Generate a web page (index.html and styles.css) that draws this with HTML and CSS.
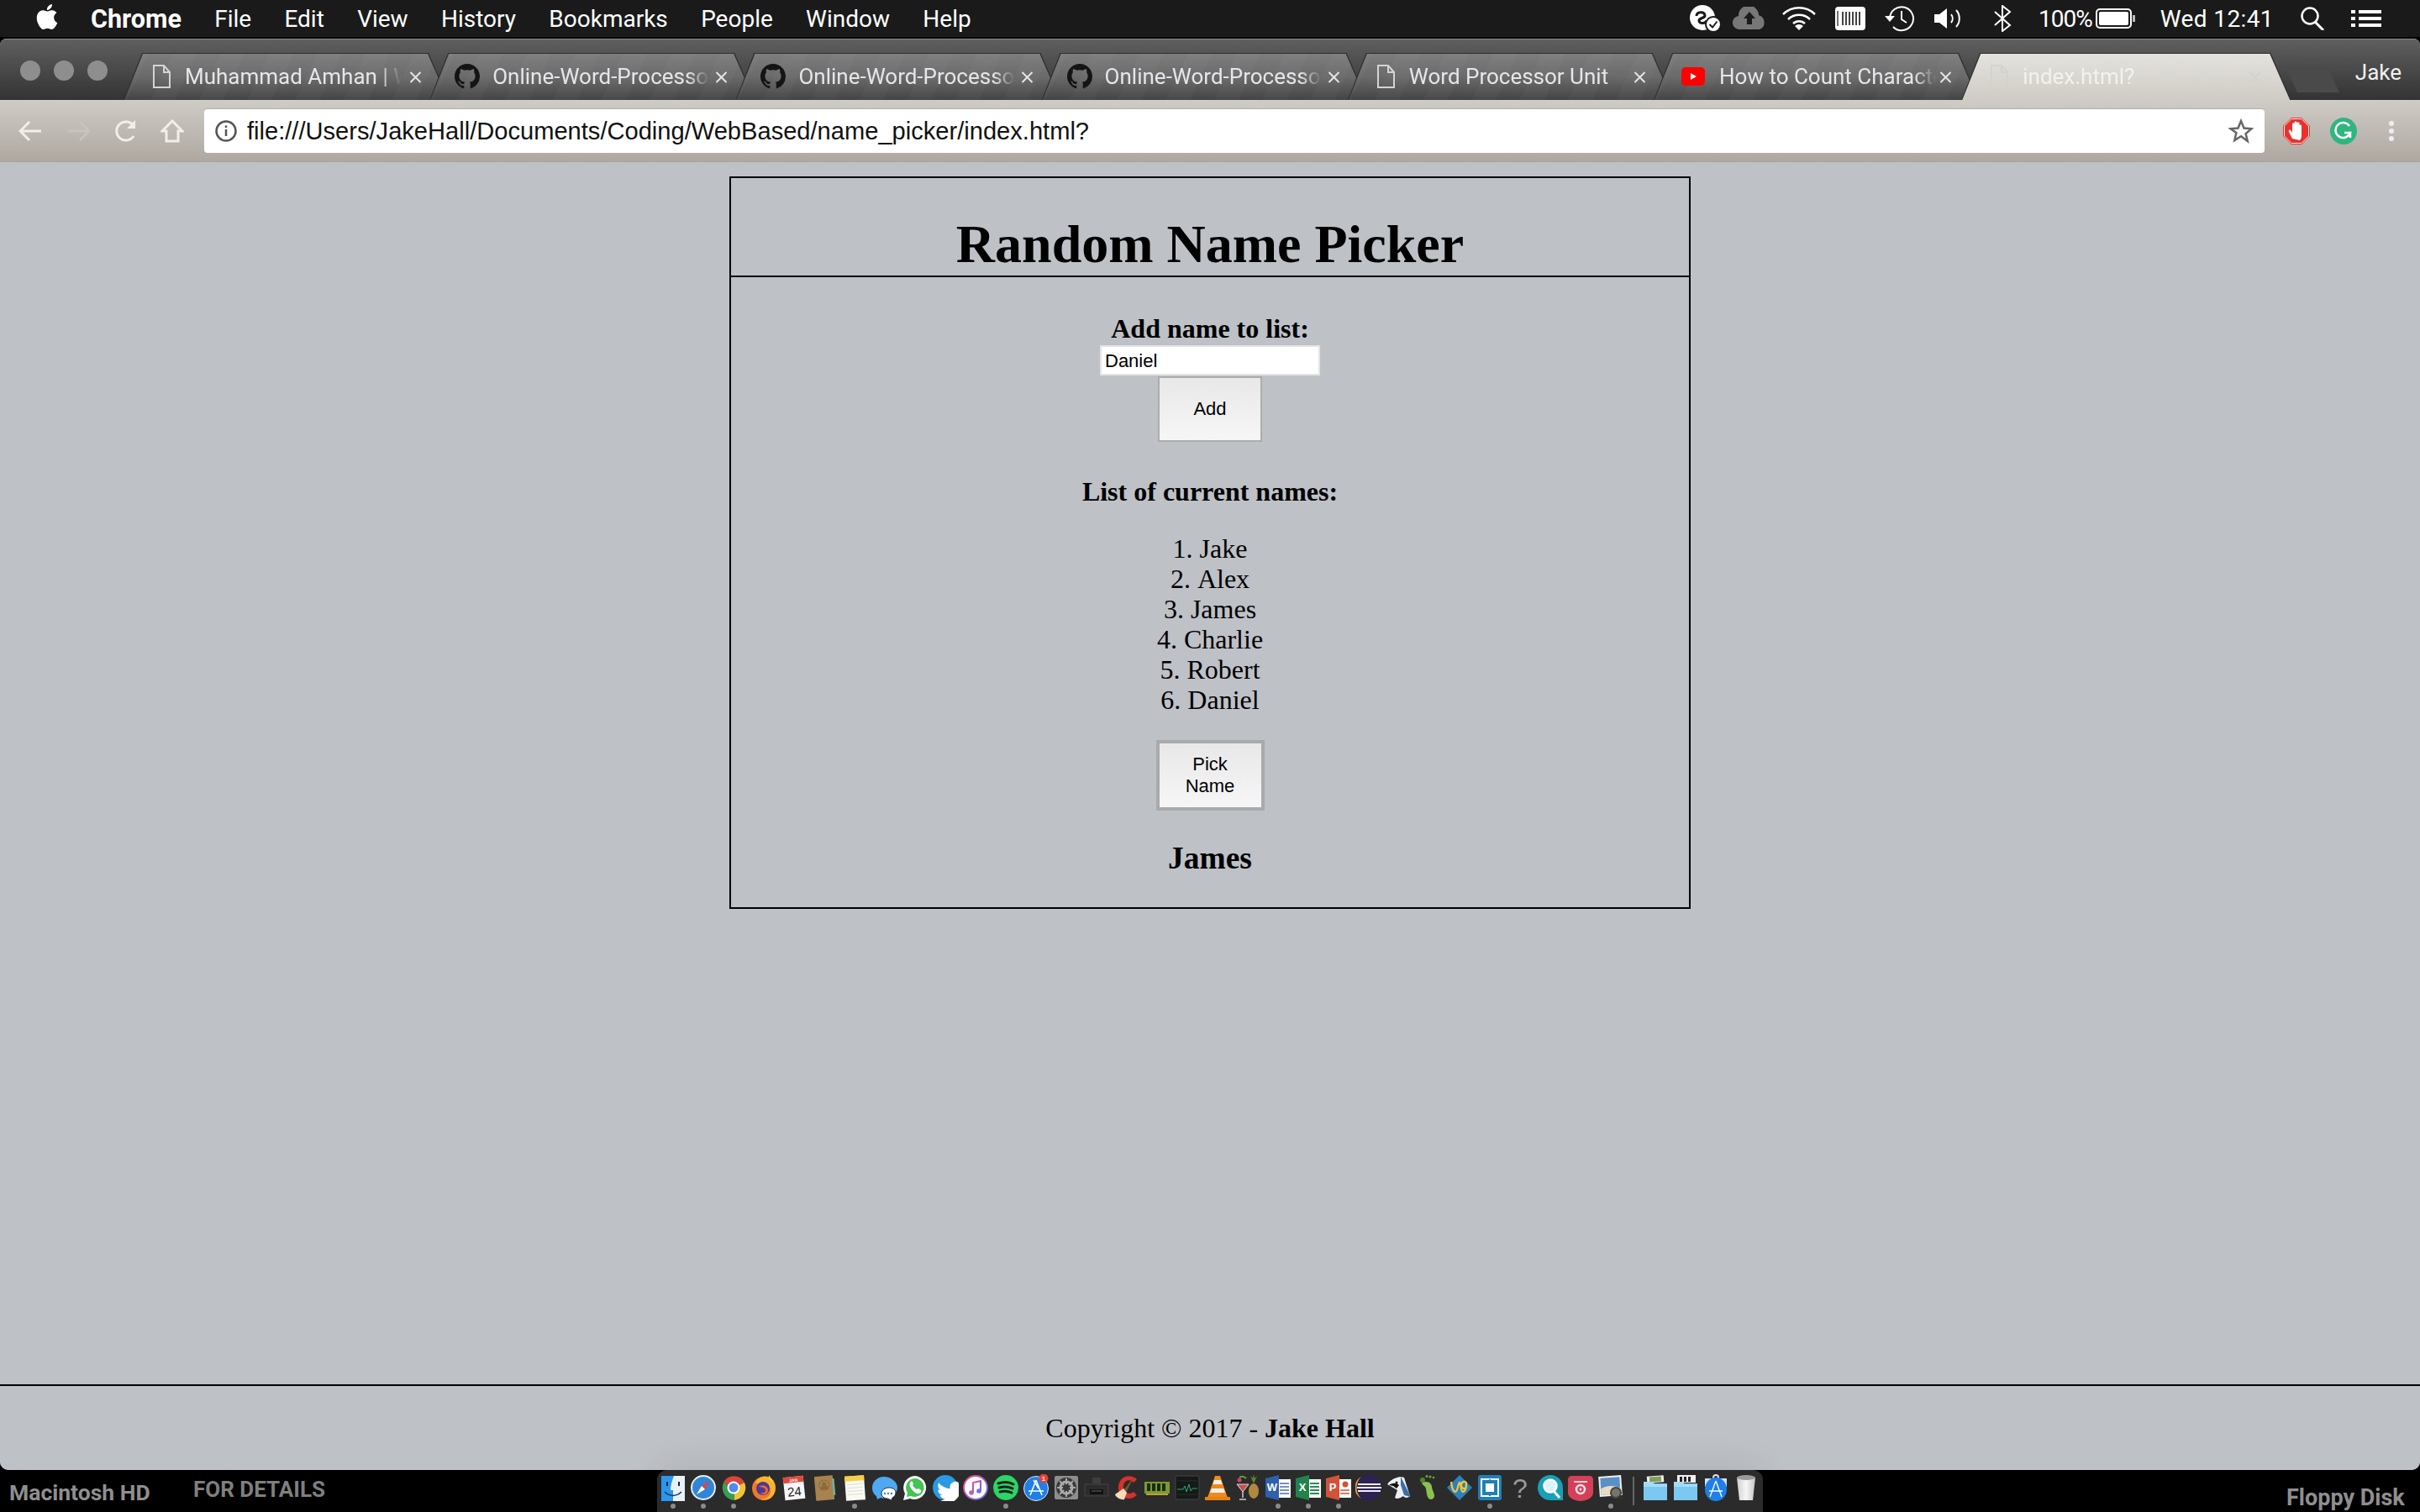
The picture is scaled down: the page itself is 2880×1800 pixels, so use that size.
FILE: index.html
```html
<!DOCTYPE html>
<html lang="en">
<head>
<meta charset="utf-8">
<title>Random Name Picker</title>
<link rel="stylesheet" href="styles.css">
</head>
<body>
<svg class="defs" width="0" height="0" aria-hidden="true">
  <symbol id="gh" viewBox="0 0 16 16"><path d="M8 0C3.58 0 0 3.58 0 8c0 3.54 2.29 6.53 5.47 7.59.4.07.55-.17.55-.38 0-.19-.01-.82-.01-1.49-2.01.37-2.53-.49-2.69-.94-.09-.23-.48-.94-.82-1.13-.28-.15-.68-.52-.01-.53.63-.01 1.08.58 1.23.82.72 1.21 1.87.87 2.33.66.07-.52.28-.87.51-1.07-1.78-.2-3.64-.89-3.64-3.95 0-.87.31-1.59.82-2.15-.08-.2-.36-1.02.08-2.12 0 0 .67-.21 2.2.82.64-.18 1.32-.27 2-.27.68 0 1.36.09 2 .27 1.53-1.04 2.2-.82 2.2-.82.44 1.1.16 1.92.08 2.12.51.56.82 1.27.82 2.15 0 3.07-1.87 3.75-3.65 3.95.29.25.54.73.54 1.48 0 1.07-.01 1.93-.01 2.2 0 .21.15.46.55.38A8.013 8.013 0 0016 8c0-4.42-3.58-8-8-8z" fill="#141414"/></symbol>
  <symbol id="doc" viewBox="0 0 21 28"><path d="M1 1h12l7 8v18H1z M13 1v8h7" fill="none" stroke="currentColor" stroke-width="2"/></symbol>
  <symbol id="cls" viewBox="0 0 15 14"><path d="M1.500 1 13.500 13M13.500 1 1.500 13" fill="none" stroke="currentColor" stroke-width="2"/></symbol>
  <symbol id="fold" viewBox="0 0 32 32"><path d="M2 11h28v20H2z" fill="#7cc8f2"/><path d="M2 9h11l2 3h15v3H2z" fill="#a3dcf8"/></symbol>
</svg>

<header class="menubar">
  <svg class="apple" viewBox="0 0 24 24" width="30" height="32"><path fill="#fff" d="M12.152 6.896c-.948 0-2.415-1.078-3.96-1.04-2.04.027-3.91 1.183-4.961 3.014-2.117 3.675-.546 9.103 1.519 12.09 1.013 1.454 2.208 3.09 3.792 3.039 1.52-.065 2.09-.987 3.935-.987 1.831 0 2.35.987 3.96.948 1.637-.026 2.676-1.48 3.676-2.948 1.156-1.688 1.636-3.325 1.662-3.415-.039-.013-3.182-1.221-3.22-4.857-.026-3.04 2.48-4.494 2.597-4.559-1.429-2.09-3.623-2.324-4.39-2.376-2-.156-3.675 1.09-4.61 1.09zM15.53 3.83c.843-1.012 1.4-2.427 1.245-3.83-1.207.052-2.662.805-3.532 1.818-.78.896-1.454 2.338-1.273 3.714 1.338.104 2.715-.688 3.559-1.701"/></svg>
  <nav class="menus">
    <strong>Chrome</strong><span>File</span><span>Edit</span><span>View</span><span>History</span><span>Bookmarks</span><span>People</span><span>Window</span><span>Help</span>
  </nav>
  <div class="status">
    <svg width="40" height="32" viewBox="0 0 40 32"><circle cx="17" cy="15" r="15" fill="#fff"/><path d="M10 13c0-5 9-6 10-1 1 4-8 3-7 7 1 4 9 3 9-1" fill="none" stroke="#1a1a1a" stroke-width="3"/><circle cx="30" cy="23" r="9" fill="#fff" stroke="#1a1a1a" stroke-width="2"/><path d="M25.500 23l3.500 3.500 5.500-7" fill="none" stroke="#1a1a1a" stroke-width="2"/></svg>
    <svg class="m13" width="40" height="28" viewBox="0 0 40 28"><path d="M9 27a8 8 0 0 1-2-16 12 12 0 0 1 24-1 9 9 0 0 1 1 17z" fill="#777"/><path d="M20 6l7 8h-4v7h-6v-7h-4z" fill="#1a1a1a"/></svg>
    <svg class="m18" width="42" height="30" viewBox="0 0 42 30"><path d="M2 10a27 27 0 0 1 38 0M8 16a19 19 0 0 1 26 0M14 21a10 10 0 0 1 14 0" fill="none" stroke="#fff" stroke-width="2.500"/><path d="M21 29l-5-5a7 7 0 0 1 10 0z" fill="#fff"/></svg>
    <svg class="m22" width="36" height="28" viewBox="0 0 36 28"><rect width="36" height="28" rx="4" fill="#fff"/><path d="M9 6v16M13 6v16M17 6v16M21 6v16M25 6v16M29 6v16" stroke="#444" stroke-width="2"/><path d="M3 5v18" stroke="#444" stroke-width="1.500"/></svg>
    <svg class="m22" width="38" height="32" viewBox="0 0 38 32"><path d="M7 16a14 14 0 1 1 4 10" fill="none" stroke="#fff" stroke-width="2"/><path d="M1 13h12l-6 7z" fill="#fff"/><path d="M21 7v10l6 4" fill="none" stroke="#fff" stroke-width="2"/></svg>
    <svg class="m22" width="34" height="26" viewBox="0 0 34 26"><path d="M0 8h6l9-7v24l-9-7H0z" fill="#fff"/><path d="M20 8a8 8 0 0 1 0 10M26 3a15 15 0 0 1 0 20" fill="none" stroke="#fff" stroke-width="2"/></svg>
    <svg class="m36" width="22" height="32" viewBox="0 0 22 32"><path d="M2 8l18 16-9 7V1l9 7L2 24" fill="none" stroke="#fff" stroke-width="2"/></svg>
    <span class="m32 pct">100%</span>
    <svg class="m4" width="47" height="24" viewBox="0 0 47 24"><rect x="1" y="1" width="41" height="22" rx="4" fill="none" stroke="#fff" stroke-width="2"/><rect x="4" y="4" width="35" height="16" rx="2" fill="#fff"/><path d="M44 8h3v8h-3z" fill="#bbb"/></svg>
    <span class="m30 clock">Wed 12:41</span>
    <svg class="m31" width="30" height="28" viewBox="0 0 30 28"><circle cx="12" cy="11" r="9.500" fill="none" stroke="#fff" stroke-width="2.500"/><path d="M18 18l10 10" stroke="#fff" stroke-width="3"/></svg>
    <svg class="m31" width="36" height="20" viewBox="0 0 36 20"><path d="M0 0h5v4H0zM9 0h27v4H9zM0 8h5v4H0zM9 8h27v4H9zM0 16h5v4H0zM9 16h27v4H9z" fill="#fff"/></svg>
  </div>
</header>

<main class="window">
  <div class="tabstrip">
    <div class="lights"><i></i><i></i><i></i></div>
    <div class="tabs">
      <div class="tab"><svg class="fav"><use href="#doc"/></svg><span class="ttl">Muhammad Amhan | W</span><svg class="x"><use href="#cls"/></svg></div>
      <div class="tab"><svg class="gh"><use href="#gh"/></svg><span class="ttl">Online-Word-Processor</span><svg class="x"><use href="#cls"/></svg></div>
      <div class="tab"><svg class="gh"><use href="#gh"/></svg><span class="ttl">Online-Word-Processor</span><svg class="x"><use href="#cls"/></svg></div>
      <div class="tab"><svg class="gh"><use href="#gh"/></svg><span class="ttl">Online-Word-Processor</span><svg class="x"><use href="#cls"/></svg></div>
      <div class="tab"><svg class="fav"><use href="#doc"/></svg><span class="ttl">Word Processor Unit</span><svg class="x"><use href="#cls"/></svg></div>
      <div class="tab"><svg class="yt" viewBox="0 0 28 22"><rect width="28" height="22" rx="5" fill="#f00"/><path d="M11 7l7 4-7 4z" fill="#fff"/></svg><span class="ttl">How to Count Characters</span><svg class="x"><use href="#cls"/></svg></div>
      <div class="tab active"><svg class="fav"><use href="#doc"/></svg><span class="ttl">index.html?</span><svg class="x"><use href="#cls"/></svg></div>
    </div>
    <div class="newtab"></div>
    <span class="profile">Jake</span>
  </div>

  <div class="toolbar">
    <svg class="tb back" viewBox="0 0 28 26"><path d="M27 13H3M13 2 2 13l11 11" fill="none" stroke="currentColor" stroke-width="3"/></svg>
    <svg class="tb fwd" viewBox="0 0 28 26"><path d="M1 13h24M15 2l11 11-11 11" fill="none" stroke="currentColor" stroke-width="3"/></svg>
    <svg class="tb rel" viewBox="0 0 28 28"><path d="M23 20a11 11 0 1 1 0-12" fill="none" stroke="currentColor" stroke-width="3"/><path d="M25 1v10H15z" fill="currentColor"/></svg>
    <svg class="tb home" viewBox="0 0 28 28"><path d="M14 2 2 14h5v12h14V14h5z" fill="none" stroke="currentColor" stroke-width="3"/></svg>
    <div class="omnibox">
      <svg class="info" width="26" height="26" viewBox="0 0 26 26"><circle cx="13" cy="13" r="11.500" fill="none" stroke="#555" stroke-width="2.500"/><path d="M13 11v8M13 6.500v2.500" stroke="#555" stroke-width="2.500"/></svg>
      <span class="url">file:///Users/JakeHall/Documents/Coding/WebBased/name_picker/index.html?</span>
      <svg class="star" width="30" height="30" viewBox="0 0 30 30"><path d="M15 3l3.500 8.500 9 .7-6.900 5.900 2.100 8.900L15 21.300 7.300 26l2.100-8.900L2.500 12.200l9-.7z" fill="none" stroke="#666" stroke-width="2.500"/></svg>
    </div>
    <svg class="ext abp" width="32" height="32" viewBox="0 0 32 32"><path d="M10 0h12l10 10v12L22 32H10L0 22V10z" fill="#e8322c"/><path d="M10 1.500h12l8.500 8.500v12L22 30.500H10L1.500 22V10z" fill="none" stroke="#eee"/><path d="M11 25l-4-8c-1-2 1-3 2-2l2 3V8c0-2 2.500-2 2.500 0v5-7c0-2 3-2 3 0v7-6c0-2 3-2 3 0v7-4c0-2 2.500-2 2.500 0v11c0 3-1 5-2 6z" fill="#fff"/></svg>
    <svg class="ext gram" width="32" height="32" viewBox="0 0 32 32"><circle cx="16" cy="16" r="16" fill="#2fb67f"/><path d="M23 10a9 9 0 1 0 1 8h-7m7-1v7" fill="none" stroke="#fff" stroke-width="2.500"/></svg>
    <svg class="ext dots" width="8" height="26" viewBox="0 0 8 26"><circle cx="4" cy="4" r="3" fill="#eee"/><circle cx="4" cy="13" r="3" fill="#eee"/><circle cx="4" cy="22" r="3" fill="#eee"/></svg>
  </div>

  <section class="page">
    <article class="box">
      <header class="box-head"><h1>Random Name Picker</h1></header>
      <div class="box-body">
        <form class="add">
          <label class="lbl" for="name">Add name to list:</label>
          <input id="name" class="field" type="text" value="Daniel">
          <button class="btn btn-add" type="button">Add</button>
        </form>
        <h4 class="lbl list-title">List of current names:</h4>
        <ol class="names">
          <li>Jake</li>
          <li>Alex</li>
          <li>James</li>
          <li>Charlie</li>
          <li>Robert</li>
          <li>Daniel</li>
        </ol>
        <button class="btn btn-pick" type="button">Pick<br>Name</button>
        <h3 class="picked">James</h3>
      </div>
    </article>
    <footer class="foot">Copyright © 2017 - <b>Jake Hall</b></footer>
  </section>
</main>

<div class="desktop">
  <span class="dlabel hd">Macintosh HD</span>
  <span class="dlabel details">FOR DETAILS</span>
  <span class="dlabel floppy">Floppy Disk</span>
  <div class="dock">
    <div class="di on"><svg viewBox="0 0 32 32"><rect x="2" y="2" width="28" height="30" fill="#e9f1f8"/><path d="M2 2h15c-3 8-4 13-4 17h3v13H2z" fill="#2a96ee"/><path d="M9 9v5M23 9v5" stroke="#123" stroke-width="2"/><path d="M6 21c6 6 14 6 20 0" fill="none" stroke="#234" stroke-width="1.500"/></svg></div>
    <div class="di on"><svg viewBox="0 0 32 32"><circle cx="16" cy="16" r="15" fill="#e8eef4"/><circle cx="16" cy="16" r="13" fill="#2f86d8"/><path d="M24 8 14 14l4 4z" fill="#e8423a"/><path d="M8 24l6-10 4 4z" fill="#fff"/></svg></div>
    <div class="di on"><svg viewBox="0 0 32 32"><path d="M16 16 4 10a14 14 0 0 1 25 0z" fill="#d9453a"/><path d="M16 16 29 10a15 15 0 0 1-12 21z" fill="#f2c433"/><path d="M16 16 17 31A15 15 0 0 1 4 10z" fill="#3b9d4e"/><circle cx="16" cy="16" r="7.500" fill="#fff"/><circle cx="16" cy="16" r="5.500" fill="#5389ec"/></svg></div>
    <div class="di"><svg viewBox="0 0 32 32"><circle cx="16" cy="17" r="14" fill="#f0782a"/><path d="M6 10C10 2 20 0 26 6c6 6 5 18-3 23-4 2-8 2-11 1 8 0 13-5 12-12C23 11 15 9 11 13z" fill="#fbb32b"/><circle cx="15" cy="17" r="8" fill="#4a3a9a"/><path d="M10 15c4-3 11-1 11 4s-7 7-9 3c3 1 6 0 6-3s-5-4-8-4z" fill="#f0682a"/><path d="M22 1c2 4 5 5 5 9l-5-4z" fill="#f9d13c"/></svg></div>
    <div class="di"><svg viewBox="0 0 32 32"><g transform="rotate(-6 16 16)"><rect x="4" y="3" width="24" height="27" fill="#f6f6f6"/><rect x="4" y="3" width="24" height="7" fill="#e0483e"/><text x="16" y="9" class="cal-m">JAN</text><text x="16" y="26" class="cal-d">24</text></g></svg></div>
    <div class="di"><svg viewBox="0 0 32 32"><g transform="rotate(-5 16 16)"><rect x="5" y="2" width="22" height="29" rx="1" fill="#a8824f"/><rect x="26" y="6" width="2.500" height="20" fill="#6fb39c"/><circle cx="16" cy="13" r="6" fill="none" stroke="#8b6a3d"/><circle cx="16" cy="12" r="2.500" fill="#8b6a3d"/><path d="M11 18a5 5 0 0 1 10 0z" fill="#8b6a3d"/></g></svg></div>
    <div class="di on"><svg viewBox="0 0 32 32"><g transform="rotate(-4 16 16)"><rect x="5" y="2" width="23" height="29" fill="#fbfaf2"/><rect x="5" y="2" width="23" height="6" fill="#f7cf46"/><path d="M7 12h19M7 16h19M7 20h19M7 24h19" stroke="#ddd"/></g></svg></div>
    <div class="di"><svg viewBox="0 0 32 32"><path d="M15 3C7 3 1 9 1 16c0 5 2 8 5 10l1 4 4-2c3 1 6 1 9 0 7-2 11-7 11-12C31 9 23 3 15 3z" fill="#4ea9f2"/><path d="M21 16c-5 0-9 3-9 7 0 3 3 6 7 6l5 2 1-3c2-1 4-3 4-6 0-4-4-6-8-6z" fill="#fff" stroke="#2b2b2b"/><circle cx="16" cy="23" r="1.300" fill="#3a87d8"/><circle cx="20" cy="23" r="1.300" fill="#3a87d8"/><circle cx="24" cy="23" r="1.300" fill="#3a87d8"/></svg></div>
    <div class="di"><svg viewBox="0 0 32 32"><path d="M16 2a14 14 0 0 0-12 21L2 31l8-2a14 14 0 1 0 6-27z" fill="#fff"/><path d="M16 5A11 11 0 0 0 7 22l-1 5 5-1a11 11 0 1 0 5-21z" fill="#43c455"/><path d="M11 9c-2 2-2 5 1 9s7 6 9 5 3-3 2-4l-3-2-2 1c-2-1-4-3-5-5l1-2-2-3z" fill="#fff"/></svg></div>
    <div class="di"><svg viewBox="0 0 32 32"><circle cx="16" cy="16" r="15" fill="#2b9ae4"/><svg x="6" y="6" width="20" height="20" viewBox="0 0 24 24"><path fill="#fff" d="M23.953 4.570a10 10 0 01-2.825.775 4.958 4.958 0 002.163-2.723c-.951.555-2.005.959-3.127 1.184a4.920 4.920 0 00-8.384 4.482C7.690 8.095 4.067 6.130 1.640 3.162a4.822 4.822 0 00-.666 2.475c0 1.710.870 3.213 2.188 4.096a4.904 4.904 0 01-2.228-.616v.060a4.923 4.923 0 003.946 4.827 4.996 4.996 0 01-2.212.085 4.936 4.936 0 004.604 3.417 9.867 9.867 0 01-6.102 2.105c-.390 0-.779-.023-1.170-.067a13.995 13.995 0 007.557 2.209c9.053 0 13.998-7.496 13.998-13.985 0-.210 0-.420-.015-.630A9.935 9.935 0 0024 4.590z"/></svg></svg></div>
    <div class="di"><svg viewBox="0 0 32 32"><defs><linearGradient id="mus" x1="0" y1="0" x2="1" y2="1"><stop offset="0" stop-color="#f0508a"/><stop offset="1" stop-color="#5a6cf0"/></linearGradient></defs><circle cx="16" cy="16" r="14" fill="#fafafa" stroke="url(#mus)" stroke-width="2"/><path d="M13 22V10l9-2v12" fill="none" stroke="url(#mus)" stroke-width="2"/><circle cx="11" cy="22" r="2.800" fill="#b060d0"/><circle cx="20" cy="20" r="2.800" fill="#8068e0"/></svg></div>
    <div class="di on"><svg viewBox="0 0 32 32"><circle cx="16" cy="16" r="15" fill="#2dd466"/><path d="M7 11c6-2 13-2 18 1M8 16c5-1.500 11-1.500 16 1M9 21c4-1 10-1 14 1" fill="none" stroke="#15201a" stroke-width="3" stroke-linecap="round"/></svg></div>
    <div class="di"><svg viewBox="0 0 32 32"><circle cx="16" cy="17" r="14.500" fill="#1f7fe8" stroke="#dfe8f2"/><path d="M16 7 9 25M16 7l7 18M7 20h18M13 7l6 10" fill="none" stroke="#fff" stroke-width="1.500"/><circle cx="25" cy="5" r="5.500" fill="#e8403a"/><text x="25" y="8" class="badge">1</text></svg></div>
    <div class="di"><svg viewBox="0 0 32 32"><rect x="2" y="2" width="28" height="28" rx="2" fill="#8e8e8e"/><circle cx="16" cy="16" r="12" fill="#3a3a3a"/><circle cx="16" cy="16" r="7" fill="none" stroke="#aaa" stroke-width="3"/><path d="M16 5v7M16 20v7M5 16h7M20 16h7M8 8l5 5M19 19l5 5M24 8l-5 5M13 19l-5 5" stroke="#aaa" stroke-width="2"/></svg></div>
    <div class="di"><svg viewBox="0 0 32 32"><path d="M11 4h10v7H11z" fill="#3d3d3d"/><path d="M2 12h28v14H2z" fill="#2c2c2c" stroke="#444"/><path d="M8 18h16v6H8z" fill="#111"/><path d="M10 20h12" stroke="#666"/></svg></div>
    <div class="di"><svg viewBox="0 0 32 32"><path d="M28 6C20-1 7 2 6 15c-1 11 12 19 22 10l-4-4c-4 4-12 2-12-6S20 5 24 10z" fill="#d5312d"/><path d="M24 4 12 19l3 3z" fill="#7a5230"/><path d="M12 17 2 24c1 4 8 7 11 6l3-8z" fill="#f4dcb8"/></svg></div>
    <div class="di"><svg viewBox="0 0 32 32"><rect x="1" y="9" width="30" height="14" fill="#7c9b2d"/><path d="M4 11h4v9H4zM10 11h4v9h-4zM16 11h4v9h-4zM22 11h4v9h-4z" fill="#1a2a10"/><path d="M3 23h26v2H3z" fill="#b8a23a"/></svg></div>
    <div class="di"><svg viewBox="0 0 32 32"><rect x="2" y="2" width="28" height="28" rx="2" fill="#141a18" stroke="#444"/><path d="M4 18h7l2-4 2 7 3-9 2 8 2-3h6" fill="none" stroke="#2ea66a"/><path d="M4 8h24M4 24h24" stroke="#23302a"/></svg></div>
    <div class="di"><svg viewBox="0 0 32 32"><path d="M13 2h6l9 26H4z" fill="#f08a1d"/><path d="M12 7h8l1.500 5h-11zM9 17h14l2 5H7z" fill="#f4f2ee"/><path d="M1 27h30v4H1z" fill="#e8801a"/></svg></div>
    <div class="di"><svg viewBox="0 0 32 32"><path d="M3 12h14l-7 9z" fill="#c9504a" stroke="#ddd"/><path d="M10 20v8M6 30h8" stroke="#ccc" stroke-width="1.500"/><circle cx="6" cy="7" r="2.500" fill="#d0406a"/><path d="M6 4c3-2 6-1 8 1" stroke="#5aa53a" stroke-width="2" fill="none"/><ellipse cx="23" cy="20" rx="6" ry="9" fill="#b08a3a"/><path d="M23 11l-4-9 3 3 1-5 1 5 3-3z" fill="#5f8a2a"/></svg></div>
    <div class="di on"><svg viewBox="0 0 32 32"><rect x="12" y="6" width="19" height="22" fill="#fff"/><path d="M18 11h11M18 15h11M18 19h11M18 23h11" stroke="#4a6fae" stroke-width="1.500"/><path d="M1 5 17 1v30L1 27z" fill="#2f5fae"/><text x="9" y="20" class="ms">W</text></svg></div>
    <div class="di on"><svg viewBox="0 0 32 32"><rect x="12" y="6" width="19" height="22" fill="#fff"/><path d="M18 11h11M18 15h11M18 19h11M18 23h11" stroke="#2e8a55" stroke-width="2"/><path d="M1 5 17 1v30L1 27z" fill="#22824c"/><text x="9" y="20" class="ms">X</text></svg></div>
    <div class="di on"><svg viewBox="0 0 32 32"><rect x="12" y="6" width="19" height="22" fill="#fff"/><circle cx="24" cy="12" r="3.500" fill="#d3523a"/><path d="M18 19h11M18 23h11" stroke="#d3523a" stroke-width="1.500"/><path d="M1 5 17 1v30L1 27z" fill="#d3523a"/><text x="9" y="20" class="ms">P</text></svg></div>
    <div class="di"><svg viewBox="0 0 32 32"><circle cx="16" cy="16" r="15" fill="#2c2255"/><path d="M7 3A15 15 0 0 0 7 29 18 18 0 0 1 7 3z" fill="#f09a2a"/><path d="M3 12h27M2 16h29M3 20h27" stroke="#f0f0f8" stroke-width="2"/></svg></div>
    <div class="di"><svg viewBox="0 0 32 32"><path d="M2 12C8 4 18 2 22 4l7 22c-3 3-7 2-8 0-4 3-8 4-10 2l3-9z" fill="#eef0f4"/><path d="M18 3l12 24-8-2-4-12z" fill="#3b6ea8"/><path d="M4 13c4-3 9-3 12 0l-3 4-4-3z" fill="#111"/><circle cx="13" cy="10" r="1.500" fill="#111"/></svg></div>
    <div class="di"><svg viewBox="0 0 32 32"><circle cx="8" cy="7" r="3" fill="#4f8a2a"/><circle cx="13" cy="2.500" r="1.500" fill="#6fa83a"/><circle cx="17" cy="3" r="1.500" fill="#6fa83a"/><circle cx="21" cy="4" r="1.300" fill="#6fa83a"/><path d="M8 10c6-3 11 1 11 5 0 3 3 7 3 11s-6 6-8 1-1-9-3-12-5-3-3-5z" fill="#8cc152"/></svg></div>
    <div class="di"><svg viewBox="0 0 32 32"><path d="M16 1l15 15-15 15L1 16z" fill="#2a80c0"/><path d="M6 9c1 8 3 12 5 12 3 0 3-10 5-11 2 0 1 11 4 11 3 0 4-6 4-10 0-3-5-3-6 1-1 3 2 6 6 5" fill="none" stroke="#f7c92c" stroke-width="2.300"/></svg></div>
    <div class="di on"><svg viewBox="0 0 32 32"><rect x="2" y="1" width="28" height="30" rx="3" fill="#1f7fb8"/><rect x="6" y="6" width="20" height="20" fill="none" stroke="#fff" stroke-width="2"/><rect x="11" y="11" width="10" height="10" fill="#fff"/><path d="M16 6v5M16 21v5" stroke="#1f7fb8" stroke-width="2"/></svg></div>
    <div class="di"><svg viewBox="0 0 32 32"><text x="16" y="28" class="qm">?</text></svg></div>
    <div class="di"><svg viewBox="0 0 32 32"><path d="M16 1C7 1 1 8 1 16s6 15 15 15h15V16C31 8 25 1 16 1z" fill="#18a0b8"/><circle cx="16" cy="14" r="7.500" fill="#d8f4f8" stroke="#fff" stroke-width="2.500"/><path d="M20 20l7 8" stroke="#fff" stroke-width="3"/></svg></div>
    <div class="di"><svg viewBox="0 0 32 32"><path d="M5 2h22c2 0 4 2 4 4v16c0 6-8 10-15 10S1 28 1 22V6c0-2 2-4 4-4z" fill="#d53f57"/><path d="M8 9h16" stroke="#f6d5da" stroke-width="2"/><circle cx="16" cy="18" r="5" fill="none" stroke="#f6e5e8" stroke-width="2.500"/><circle cx="16" cy="18" r="1.500" fill="#f6e5e8"/></svg></div>
    <div class="di on"><svg viewBox="0 0 32 32"><g transform="rotate(-4 16 14)"><rect x="2" y="2" width="27" height="24" fill="#eee"/><rect x="4" y="4" width="23" height="20" fill="#5a90c8"/><path d="M4 17c6-4 14-4 23 0v7H4z" fill="#e8dcc0"/></g><circle cx="22" cy="22" r="6" fill="#7a7468" stroke="#444" stroke-width="2"/><path d="M26 26l4 4" stroke="#333" stroke-width="2.500"/></svg></div>
    <div class="dsep"></div>
    <div class="di"><svg viewBox="0 0 32 32"><g transform="rotate(-4 16 6)"><rect x="6" y="2" width="20" height="8" fill="#eee"/><path d="M9 3h14v6H9z" fill="#7ea05a"/></g><use href="#fold"/></svg></div>
    <div class="di"><svg viewBox="0 0 32 32"><rect x="6" y="1" width="22" height="9" fill="#f0f0f0"/><path d="M9 3h3v6H9zM14 3h3v6h-3zM19 3h3v6h-3z" fill="#222"/><use href="#fold"/></svg></div>
    <div class="di"><svg viewBox="0 0 32 32"><circle cx="16" cy="4" r="3" fill="none" stroke="#dde" stroke-width="2"/><rect x="3" y="5" width="26" height="10" fill="#cfe3f4"/><ellipse cx="16" cy="18" rx="13" ry="14" fill="#1f7fe8"/><path d="M16 8 9 27M16 8l7 19M8 20h16" fill="none" stroke="#fff" stroke-width="1.300"/></svg></div>
    <div class="di"><svg viewBox="0 0 32 32"><defs><linearGradient id="tr" x1="0" x2="1" y1="0" y2="0"><stop offset="0" stop-color="#cfcfcf"/><stop offset=".5" stop-color="#f6f6f6"/><stop offset="1" stop-color="#c4c4c4"/></linearGradient></defs><path d="M5 4h22l-3 27H8z" fill="url(#tr)"/><ellipse cx="16" cy="4" rx="11" ry="3" fill="#9a9a9a"/></svg></div>
  </div>
</div>
</body>
</html>
```
FILE: styles.css
```css
* { box-sizing: border-box; }
html, body { margin: 0; height: 1800px; overflow: hidden; background: #000; }
body { display: flex; flex-direction: column; width: 2880px; }
.defs { position: absolute; }

/* menu bar */
.menubar { height: 46px; flex: none; display: flex; align-items: center; background: #1a1a1a; border-bottom: 2px solid #000; padding-left: 41px; color: #fff; font: 28px Roboto, sans-serif; }
.apple { flex: none; margin-top: -4px; }
.menus { display: flex; gap: 39.300px; margin-left: 37px; }
.menus strong { font-weight: 700; font-size: 30.500px; line-height: 33px; }
.status { margin-left: auto; padding-right: 46px; display: flex; align-items: center; }
.m4 { margin-left: 4px; } .m13 { margin-left: 13px; } .m18 { margin-left: 18px; } .m22 { margin-left: 22px; }
.m30 { margin-left: 30px; } .m31 { margin-left: 31px; } .m32 { margin-left: 32px; } .m36 { margin-left: 36px; }
.pct { letter-spacing: -1px; }
.clock { letter-spacing: .4px; }

/* window */
.window { height: 1704px; flex: none; display: flex; flex-direction: column; border-radius: 8px 8px 10px 10px; overflow: hidden; background: #bec1c6; }
.tabstrip { height: 73px; flex: none; display: flex; align-items: flex-end; position: relative; background: linear-gradient(#5f5f5f, #333); border-top: 1px solid #8a8a8a; font: 26px Roboto, sans-serif; }
.lights { position: absolute; left: 24px; top: 25px; display: flex; gap: 16px; }
.lights i { width: 24px; height: 24px; border-radius: 50%; background: #8e8e8e; }
.tabs { display: flex; margin-left: 147px; }
.tab { width: 387px; height: 56px; flex: none; margin-right: -22.800px; position: relative; display: flex; align-items: center; padding-left: 33px; color: #e4e6ea; clip-path: polygon(22px 0, calc(100% - 24px) 0, 100% 100%, 0 100%); background: #2d2d2d; }
.tab::before { content: ""; position: absolute; inset: 1px 1px 0 1px; clip-path: polygon(22px 0, calc(100% - 24px) 0, 100% 100%, 0 100%); background: repeating-linear-gradient(115deg, rgba(255,255,255,.025) 0 26px, rgba(255,255,255,0) 26px 52px), linear-gradient(#7d7d7d 0%, #6a6a6a 50%, #444 100%); }
.tab > * { position: relative; }
.fav { width: 21px; height: 28px; flex: none; color: #d4d4d4; margin-left: 2px; }
.gh { width: 30px; height: 30px; flex: none; margin-left: -3px; }
.yt { width: 28px; height: 22px; flex: none; }
.ttl { width: 258px; margin-left: 17px; white-space: nowrap; overflow: hidden; -webkit-mask-image: linear-gradient(90deg, #000 90%, transparent); mask-image: linear-gradient(90deg, #000 90%, transparent); }
.gh + .ttl { margin-left: 15px; }
.tab .x { width: 15px; height: 14px; flex: none; color: #e6e6e6; position: absolute; left: 340px; top: 22px; }
.tab.active { width: 392px; margin-left: 2px; z-index: 2; color: #f2f2f0; }
.tab.active::before { background: linear-gradient(#e4e2dd, #cfccc5); }
.tab.active .fav { color: #d3d2ce; }
.tab.active .x { color: #d3d2ce; left: 342px; }
.newtab { position: absolute; left: 2720px; top: 33px; width: 64px; height: 30px; background: #4a4a4a; clip-path: polygon(0 0, 50px 0, 100% 100%, 14px 100%); }
.profile { position: absolute; right: 22px; top: 24px; color: #f0f0f0; }

.toolbar { height: 74px; flex: none; display: flex; align-items: center; background: linear-gradient(#cfccc5, #aea8a1); border-bottom: 1px solid #a8a39c; }
.tb { flex: none; width: 28px; height: 28px; color: #f2efea; }
.back { margin-left: 22px; } .fwd { margin-left: 30px; color: #c8c4bd; } .rel { margin-left: 28px; } .home { margin-left: 27px; }
.omnibox { width: 2452px; height: 52px; flex: none; margin-left: 24px; display: flex; align-items: center; background: #fff; border-radius: 4px; padding: 0 13px; font: 29.100px "Liberation Sans", sans-serif; color: #111; box-shadow: 0 -1px 0 #b5b1aa; }
.info { flex: none; }
.url { margin-left: 12px; padding-top: 2px; white-space: nowrap; }
.star { margin-left: auto; }
.ext { flex: none; }
.abp { margin-left: 22px; } .gram { margin-left: 24px; } .dots { margin-left: 37px; }

/* page */
.page { flex: 1; display: flex; flex-direction: column; background: #bec1c6; color: #000; font: 32px/36px "Liberation Serif", serif; }
.box { width: 1144px; height: 872px; margin: 17px auto 0; border: 2px solid #000; text-align: center; flex: none; }
.box-head { height: 118px; border-bottom: 2px solid #000; }
h1 { margin: 0; padding-top: 42px; font-size: 64px; line-height: 74px; font-weight: 700; }
.box-body { display: flex; flex-direction: column; align-items: center; padding-top: 43px; }
.add { display: flex; flex-direction: column; align-items: center; }
.lbl { font-weight: 700; font-size: 32px; line-height: 36px; margin: 0; }
.field { width: 262px; height: 36px; margin: 2px 0 1px; border: 2px solid #e4e4e4; padding: 2px 4px 0 4px; background: #fff; font: 22px "Liberation Sans", sans-serif; color: #000; border-radius: 0; outline: 0; }
.btn { display: block; padding: 0; background: linear-gradient(#e8e8e8, #f6f6f6); color: #000; font: 22px/26px "Liberation Sans", sans-serif; border-radius: 0; }
.btn-add { width: 124px; height: 78px; border: 2px solid #adadad; }
.list-title { margin-top: 41px; }
.names { margin: 32px 0 0; padding: 0; list-style-position: inside; }
.btn-pick { width: 129px; height: 84px; margin-top: 30px; border: 4px solid #a9aaae; }
.picked { margin: 35px 0 0; font-size: 37.440px; line-height: 43px; font-weight: 700; }
.foot { height: 102px; flex: none; margin-top: auto; border-top: 2px solid #000; display: flex; align-items: center; justify-content: center; white-space: pre; }
.foot b { font-weight: 700; }

/* desktop and dock */
.desktop { flex: 1; position: relative; background: #000; }
.dlabel { position: absolute; font: 700 26px Roboto, sans-serif; color: #8f8f8f; white-space: nowrap; }
.hd { left: 11px; top: 11px; font-size: 26.500px; }
.details { left: 230px; top: 8px; color: #7f7f7f; }
.floppy { left: 2721px; top: 17px; font-size: 27px; }
.dock { position: absolute; left: 782px; top: 0; width: 1316px; height: 50px; display: flex; padding: 5px 0 0 1px; border-radius: 12px 12px 0 0; background: #2b2b2b; box-shadow: 0 -6px 40px rgba(0,0,0,.08); }
.di { width: 36px; flex: none; position: relative; display: flex; justify-content: center; }
.di svg { width: 32px; height: 32px; }
.di.on::after { content: ""; position: absolute; left: calc(50% - 3px); top: 35px; width: 6px; height: 6px; border-radius: 50%; background: #8a8a8a; }
.dsep { width: 2px; height: 34px; margin: 3px 7.500px 0; background: #666; flex: none; }
.cal-m { font: 700 5px "Liberation Sans", sans-serif; fill: #fff; text-anchor: middle; }
.cal-d { font: 15px "Liberation Sans", sans-serif; fill: #222; text-anchor: middle; }
.badge { font: 700 8px "Liberation Sans", sans-serif; fill: #fff; text-anchor: middle; }
.ms { font: 700 13px "Liberation Sans", sans-serif; fill: #fff; text-anchor: middle; }
.qm { font: 32px "Liberation Sans", sans-serif; fill: #9a9a9a; text-anchor: middle; }
```
